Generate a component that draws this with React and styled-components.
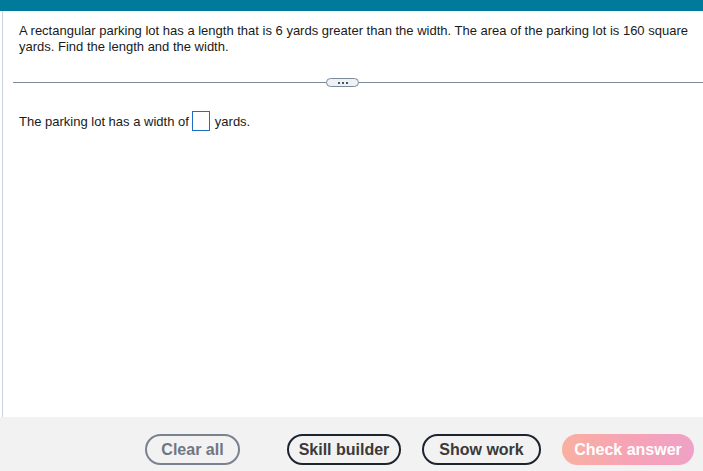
import React from 'react';
import styled, { createGlobalStyle } from 'styled-components';

const GlobalStyle = createGlobalStyle`
  html, body {
    margin: 0;
    padding: 0;
    background: #fff;
  }
  body {
    font-family: "Liberation Sans", Arial, sans-serif;
  }
`;

const Page = styled.div`
  width: 703px;
  height: 471px;
  display: flex;
  flex-direction: column;
  overflow: hidden;
`;

const TopBar = styled.div`
  height: 11px;
  background-color: #007a9b;
  flex-shrink: 0;
`;

const Main = styled.div`
  flex: 1;
  border-left: 1px solid #c9d2e0;
  margin-left: 2px;
  padding: 12px 0 0 16px;
`;

const Question = styled.p`
  margin: 0;
  padding-right: 12px;
  font-size: 13px;
  line-height: 16px;
  color: #1a1a1a;
`;

const Divider = styled.div`
  position: relative;
  margin: 27px 0 0 -6px;
  height: 1px;
  background-color: #7d8b99;
`;

const MorePill = styled.div`
  position: absolute;
  left: 313px;
  top: -4px;
  width: 31px;
  height: 7px;
  border: 1px solid #7d8b99;
  border-radius: 5px;
  background: #eef2f6;
  display: flex;
  align-items: center;
  justify-content: center;
  gap: 2px;
`;

const Dot = styled.span`
  width: 2px;
  height: 2px;
  background: #4a5560;
`;

const AnswerLine = styled.div`
  margin-top: 28px;
  display: flex;
  align-items: center;
  font-size: 13px;
  color: #1a1a1a;
`;

const Blank = styled.span`
  display: inline-block;
  width: 16px;
  height: 18px;
  border: 1px solid #1f6fc6;
  margin: 0 5px 0 3px;
`;

const Footer = styled.div`
  height: 54px;
  flex-shrink: 0;
  background-color: #f2f2f2;
  display: flex;
  align-items: flex-start;
  padding-top: 17px;
  box-sizing: border-box;
`;

const Button = styled.button`
  height: 31px;
  box-sizing: border-box;
  padding: 0;
  white-space: nowrap;
  border-radius: 16px;
  font-family: "Liberation Sans", Arial, sans-serif;
  font-weight: bold;
  font-size: 16px;
  background: ${(p) => (p.$primary ? 'linear-gradient(90deg, #f9b0a0, #f6a2b8 55%, #efa2c6)' : 'transparent')};
  color: ${(p) => p.$color || '#3a3a3a'};
  border: ${(p) => (p.$primary ? 'none' : `2px solid ${p.$border || '#1d2430'}`)};
  margin-left: ${(p) => p.$ml || 0}px;
  width: ${(p) => p.$w}px;
  flex-shrink: 0;
  cursor: pointer;
`;

export default function App() {
  return (
    <>
      <GlobalStyle />
      <Page>
        <TopBar />
        <Main>
          <Question>
            A rectangular parking lot has a length that is 6 yards greater than the width. The area of the parking lot is 160 square yards. Find the length and the width.
          </Question>
          <Divider>
            <MorePill>
              <Dot />
              <Dot />
              <Dot />
            </MorePill>
          </Divider>
          <AnswerLine>
            The parking lot has a width of<Blank />yards.
          </AnswerLine>
        </Main>
        <Footer>
          <Button $ml={145} $w={95} $border="#7a8290" $color="#6e7682">Clear all</Button>
          <Button $ml={47} $w={114}>Skill builder</Button>
          <Button $ml={21} $w={119}>Show work</Button>
          <Button $ml={21} $w={132} $primary $color="#fff">Check answer</Button>
        </Footer>
      </Page>
    </>
  );
}
